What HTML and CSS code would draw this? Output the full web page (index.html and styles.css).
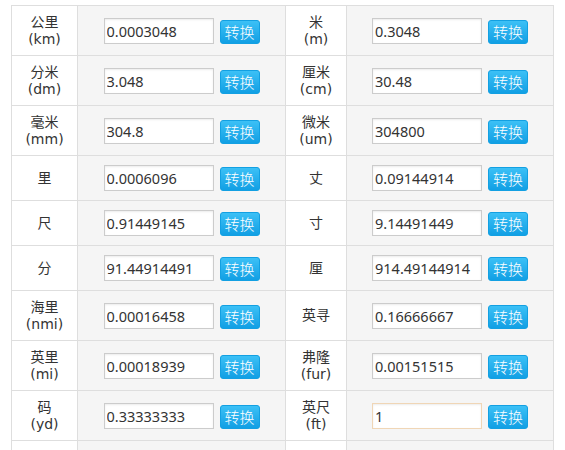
FILE: index.html
```html
<!DOCTYPE html>
<html lang="zh">
<head>
<meta charset="utf-8">
<title>长度换算</title>
<link rel="stylesheet" href="styles.css">
</head>
<body>
<table class="conv">
  <colgroup>
    <col class="c-label1"><col class="c-field1"><col class="c-label2"><col class="c-field2">
  </colgroup>
  <tbody>
    <tr class="tall">
      <td class="label">公里<br>(km)</td>
      <td class="field"><div class="pair"><input class="num" value="0.0003048"><button class="btn">转换</button></div></td>
      <td class="label">米<br>(m)</td>
      <td class="field"><div class="pair"><input class="num" value="0.3048"><button class="btn">转换</button></div></td>
    </tr>
    <tr class="tall">
      <td class="label">分米<br>(dm)</td>
      <td class="field"><div class="pair"><input class="num" value="3.048"><button class="btn">转换</button></div></td>
      <td class="label">厘米<br>(cm)</td>
      <td class="field"><div class="pair"><input class="num" value="30.48"><button class="btn">转换</button></div></td>
    </tr>
    <tr class="tall">
      <td class="label">毫米<br>(mm)</td>
      <td class="field"><div class="pair"><input class="num" value="304.8"><button class="btn">转换</button></div></td>
      <td class="label">微米<br>(um)</td>
      <td class="field"><div class="pair"><input class="num" value="304800"><button class="btn">转换</button></div></td>
    </tr>
    <tr class="short">
      <td class="label">里</td>
      <td class="field"><div class="pair"><input class="num" value="0.0006096"><button class="btn">转换</button></div></td>
      <td class="label">丈</td>
      <td class="field"><div class="pair"><input class="num" value="0.09144914"><button class="btn">转换</button></div></td>
    </tr>
    <tr class="short">
      <td class="label">尺</td>
      <td class="field"><div class="pair"><input class="num" value="0.91449145"><button class="btn">转换</button></div></td>
      <td class="label">寸</td>
      <td class="field"><div class="pair"><input class="num" value="9.14491449"><button class="btn">转换</button></div></td>
    </tr>
    <tr class="short">
      <td class="label">分</td>
      <td class="field"><div class="pair"><input class="num" value="91.44914491"><button class="btn">转换</button></div></td>
      <td class="label">厘</td>
      <td class="field"><div class="pair"><input class="num" value="914.49144914"><button class="btn">转换</button></div></td>
    </tr>
    <tr class="tall">
      <td class="label">海里<br>(nmi)</td>
      <td class="field"><div class="pair"><input class="num" value="0.00016458"><button class="btn">转换</button></div></td>
      <td class="label">英寻</td>
      <td class="field"><div class="pair"><input class="num" value="0.16666667"><button class="btn">转换</button></div></td>
    </tr>
    <tr class="tall">
      <td class="label">英里<br>(mi)</td>
      <td class="field"><div class="pair"><input class="num" value="0.00018939"><button class="btn">转换</button></div></td>
      <td class="label">弗隆<br>(fur)</td>
      <td class="field"><div class="pair"><input class="num" value="0.00151515"><button class="btn">转换</button></div></td>
    </tr>
    <tr class="tall">
      <td class="label">码<br>(yd)</td>
      <td class="field"><div class="pair"><input class="num" value="0.33333333"><button class="btn">转换</button></div></td>
      <td class="label">英尺<br>(ft)</td>
      <td class="field"><div class="pair"><input class="num active" value="1"><button class="btn">转换</button></div></td>
    </tr>
    <tr class="tall">
      <td class="label">英寸<br>(in)</td>
      <td class="field"><div class="pair"><input class="num" value="12"><button class="btn">转换</button></div></td>
      <td class="label">密耳<br>(mil)</td>
      <td class="field"><div class="pair"><input class="num" value="12000"><button class="btn">转换</button></div></td>
    </tr>
  </tbody>
</table>
</body>
</html>
```

FILE: styles.css
```css
html, body {
  margin: 0;
  padding: 0;
  background: #ffffff;
}

body {
  font-family: "DejaVu Sans", "Noto Sans CJK SC", sans-serif;
  font-size: 14px;
  color: #333333;
}

.conv {
  border-collapse: collapse;
  table-layout: fixed;
  width: 543px;
  margin: 5px 0 0 11px;
}

.c-label1 { width: 66px; }
.c-field1 { width: 208px; }
.c-label2 { width: 61px; }
.c-field2 { width: 207px; }

.conv td {
  border: 1px solid #dedede;
  padding: 0;
  vertical-align: middle;
}

.tall td { height: 49px; }
.short td { height: 44px; }

.label {
  background: #ffffff;
  text-align: center;
  line-height: 17px;
  color: #333333;
}

.field {
  background: #f5f5f5;
}

.pair {
  display: flex;
  justify-content: center;
  align-items: flex-end;
  gap: 6px;
}

.num {
  box-sizing: border-box;
  width: 110px;
  height: 26px;
  margin: 0;
  padding: 0 2px;
  border: 1px solid #cccccc;
  background: #ffffff;
  box-shadow: inset 0 1px 2px rgba(0, 0, 0, 0.08);
  font-family: "Noto Sans", "DejaVu Sans", sans-serif;
  font-size: 14.5px;
  color: #333333;
  outline: none;
}

.num.active {
  border-color: #f0d6b6;
}

.btn {
  box-sizing: border-box;
  width: 40px;
  height: 24px;
  margin: 0;
  padding: 0;
  border: 1px solid #13a0e2;
  border-radius: 3px;
  background: linear-gradient(#3cc0f6, #119fe4);
  color: #ffffff;
  font-family: "Noto Sans CJK SC", sans-serif;
  font-size: 15px;
  font-weight: 300;
  line-height: 20px;
  cursor: pointer;
}
```
